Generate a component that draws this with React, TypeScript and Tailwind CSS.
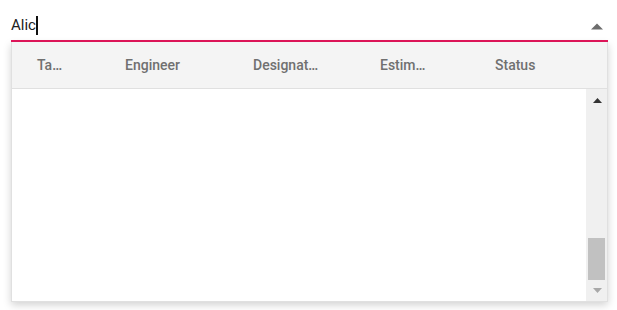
import React from "react";

export default function App() {
  const cols = [
    { label: "Ta…", w: "w-[113px]", pl: "pl-[25px]" },
    { label: "Engineer", w: "w-[128px]", pl: "pl-0" },
    { label: "Designat…", w: "w-[127px]", pl: "pl-0" },
    { label: "Estim…", w: "w-[115px]", pl: "pl-0" },
    { label: "Status", w: "flex-1", pl: "pl-0" },
  ];
  return (
    <div
      className="w-[617px] h-[310px] bg-white relative"
      style={{ fontFamily: "Roboto, 'Liberation Sans', sans-serif" }}
    >
      <div className="pl-[11px] pr-[9px] pt-[11px]">
        <div className="flex items-center h-[31px] border-b-2 border-[#e3165b]">
          <div className="flex-1 text-[15px] text-[#212121] leading-none flex items-center">
            <span>Alic</span>
            <span className="inline-block w-[2px] h-[19px] bg-[#111] ml-[0px]" />
          </div>
          <svg width="12" height="7" viewBox="0 0 12 7" className="mr-[5px] mt-[2px]">
            <path d="M0 6.5 L6 0.5 L12 6.5 Z" fill="#6d6d6d" />
          </svg>
        </div>
        <div className="h-[260px] bg-white border border-[#e0e0e0] border-t-0 shadow-[0_3px_8px_rgba(0,0,0,0.18)] flex flex-col">
          <div className="h-[47px] bg-[#f4f4f4] border-b border-[#e0e0e0] flex items-center">
            {cols.map((c) => (
              <div
                key={c.label}
                className={`${c.w} ${c.pl} text-[14px] font-medium text-[#707070]`}
              >
                {c.label}
              </div>
            ))}
          </div>
          <div className="flex-1 flex">
            <div className="flex-1" />
            <div className="w-[21px] bg-[#f0f0f0] flex flex-col items-center">
              <svg width="9" height="5" viewBox="0 0 9 5" className="mt-[9px] ml-[2px]">
                <path d="M0 5 L4.5 0 L9 5 Z" fill="#333" />
              </svg>
              <div className="flex-1" />
              <div className="w-[17px] h-[42px] bg-[#c1c1c1]" />
              <svg width="9" height="5" viewBox="0 0 9 5" className="mt-[8px] mb-[8px] ml-[2px]">
                <path d="M0 0 L9 0 L4.5 5 Z" fill="#a8a8a8" />
              </svg>
            </div>
          </div>
        </div>
      </div>
    </div>
  );
}
